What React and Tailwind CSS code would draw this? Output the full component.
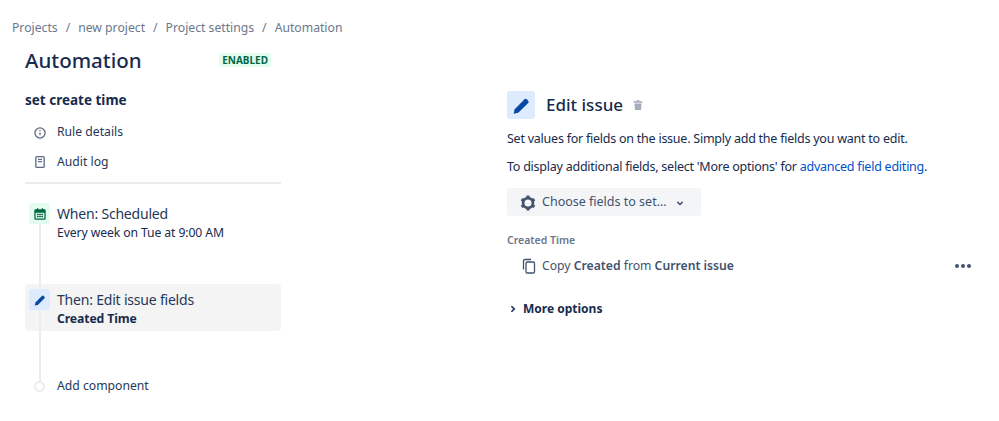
import React from 'react';

const font = { fontFamily: '"Noto Sans", sans-serif' };

function Pencil({ className }) {
  return (
    <svg viewBox="0 0 24 24" className={className} fill="currentColor">
      <path d="M4.2 16.3 15.6 4.9a1.6 1.6 0 0 1 2.2 0l1.9 1.9a1.6 1.6 0 0 1 0 2.2L8.3 20.4 3 21.5l1.2-5.2z" />
    </svg>
  );
}

function Step({ tone, icon, title, sub, bold, active }) {
  return (
    <div className={`flex h-[47px] items-start rounded pl-1 pt-[5px] ${active ? 'bg-[#f4f4f4]' : ''}`}>
      <span className={`relative flex h-[21px] w-[21px] items-center justify-center rounded-[3px] ${tone}`}>{icon}</span>
      <div className="ml-[7px]">
        <div className="text-[14px] leading-[21px] tracking-[-0.2px] text-[#253858]">{title}</div>
        <div className={`text-[12.2px] leading-[18px] tracking-[-0.1px] text-[#172b4d] ${bold ? 'font-bold' : ''}`}>{sub}</div>
      </div>
    </div>
  );
}

export default function App() {
  return (
    <div className="h-[421px] w-[999px] overflow-hidden bg-white text-[#172b4d]" style={font}>
      {/* Breadcrumbs */}
      <div className="flex gap-[8px] pl-3 pt-[20px] text-[12.2px] leading-[16px] text-[#6b778c]">
        <span>Projects</span><span>/</span>
        <span>new project</span><span>/</span>
        <span>Project settings</span><span>/</span>
        <span>Automation</span>
      </div>

      <div className="flex pl-[25px] pt-[8px]">
        {/* Left column */}
        <div className="w-[256px]">
          <div className="flex h-[32px] items-center justify-between pr-[10px]">
            <h1 className="text-[20.5px] font-medium leading-[30px] text-[#172b4d]">Automation</h1>
            <span className="rounded-[3px] bg-[#e3fcef] px-[3px] text-[10px] font-bold leading-[14px] text-[#006644]">ENABLED</span>
          </div>
          <div className="pt-[14px] text-[13.5px] font-bold leading-[20px] text-[#172b4d]">set create time</div>

          <div className="mt-[7px] flex h-[30px] items-center pl-[8px] pt-[1px] text-[12.2px] text-[#253858]">
            <svg viewBox="0 0 16 16" className="h-[14px] w-[14px] text-[#5e6c84]" fill="none" stroke="currentColor" strokeWidth="1.5">
              <circle cx="8" cy="8" r="5.8" />
              <path d="M8 7.4v3.2" />
              <circle cx="8" cy="5.2" r="0.9" fill="currentColor" stroke="none" />
            </svg>
            <span className="ml-[10px]">Rule details</span>
          </div>
          <div className="flex h-[30px] items-center pl-[8px] text-[12.2px] text-[#253858]">
            <svg viewBox="0 0 16 16" className="h-[14px] w-[14px] text-[#5e6c84]" fill="none" stroke="currentColor" strokeWidth="1.5">
              <rect x="3.2" y="1.8" width="9.6" height="12.4" rx="1.2" />
              <path d="M5.8 5h4.4M5.8 7.6h4.4" />
            </svg>
            <span className="ml-[10px]">Audit log</span>
          </div>
          <div className="mt-[5px] h-[2px] bg-[#ebecf0]" />

          {/* Rule steps */}
          <div className="relative pt-[14px]">
            <div className="absolute bottom-[14px] left-[14px] top-[30px] w-[2px] bg-[#ebecf0]" />
            <Step
              tone="bg-[#e3fcef]"
              icon={
                <svg viewBox="0 0 16 16" className="h-[14px] w-[14px] text-[#006644]" fill="currentColor">
                  <path fillRule="evenodd" d="M3 2.500h1.500V1.500h1.500v1h4v-1h1.500v1H13a1.500 1.500 0 0 1 1.500 1.500v9a1.500 1.500 0 0 1-1.500 1.500H3A1.500 1.500 0 0 1 1.500 13V4A1.500 1.500 0 0 1 3 2.500zM3 6.500V13h10V6.500H3zM4.500 7.800h2v1.500h-2zM7 7.800h2v1.500H7zM9.500 7.800h2v1.500h-2zM4.500 10.200h2v1.500h-2zM7 10.200h2v1.500H7zM9.500 10.200h2v1.500h-2z" />
                </svg>
              }
              title="When: Scheduled"
              sub="Every week on Tue at 9:00 AM"
            />
            <div className="h-[39px]" />
            <Step
              active
              tone="bg-[#deebff]"
              icon={<Pencil className="h-[14px] w-[14px] text-[#0747a6]" />}
              title="Then: Edit issue fields"
              sub="Created Time"
              bold
            />
            <div className="relative flex items-center pl-[9px] pt-[45px] text-[12.2px] leading-[20px] text-[#253858]">
              <span className="h-[11px] w-[11px] rounded-full border-2 border-[#ebecf0] bg-white" />
              <span className="ml-[12px]">Add component</span>
            </div>
          </div>
        </div>

        {/* Right column */}
        <div className="ml-[226px] w-[466px] pt-[47px]">
          <div className="flex items-center">
            <span className="flex h-[28px] w-[28px] items-center justify-center rounded-[3px] bg-[#deebff]">
              <Pencil className="h-[21px] w-[21px] text-[#0747a6]" />
            </span>
            <h2 className="ml-[11px] text-[17px] font-medium leading-[28px] text-[#172b4d]">Edit issue</h2>
            <svg viewBox="0 0 16 16" className="ml-[9px] h-[12px] w-[12px] text-[#a5adba]" fill="currentColor">
              <path d="M2 3h12v2H2zM6 1.500h4V3H6zM3.200 6h9.600l-.8 8.500H4z" />
            </svg>
          </div>
          <p className="mt-[10px] text-[12.5px] leading-[20px] tracking-[-0.24px] text-[#172b4d]">Set values for fields on the issue. Simply add the fields you want to edit.</p>
          <p className="mt-[8px] text-[12.5px] leading-[20px] tracking-[-0.24px] text-[#172b4d]">
            To display additional fields, select 'More options' for <span className="text-[#0052cc]">advanced field editing</span>.
          </p>
          <button className="mt-[11px] flex h-[28px] w-[194px] items-center rounded-[3px] bg-[#f4f5f7] pl-[12px] pt-[1px] text-[12.5px] text-[#42526e]">
            <svg viewBox="0 0 24 24" className="h-[18px] w-[18px]" fill="none" stroke="currentColor">
              <circle cx="12" cy="12" r="6.500" strokeWidth="3.500" />
              <path strokeWidth="4" d="M12 2v3M12 19v3M3.300 7l2.600 1.500M18.100 15.500l2.600 1.500M3.300 17l2.600-1.500M18.100 8.500 20.700 7" />
            </svg>
            <span className="ml-[5px]">Choose fields to set...</span>
            <svg viewBox="0 0 16 16" className="ml-[7px] h-[12px] w-[12px]" fill="none" stroke="currentColor" strokeWidth="2">
              <path d="M4.500 6.500 8 10l3.500-3.500" />
            </svg>
          </button>
          <div className="mt-[17px] text-[10.5px] font-semibold leading-[14px] text-[#6b778c]">Created Time</div>
          <div className="mt-[8px] flex h-[22px] items-center pl-[14px] text-[12.2px] text-[#42526e]">
            <svg viewBox="0 0 16 16" className="h-[16px] w-[16px] text-[#42526e]" fill="none" stroke="currentColor" strokeWidth="1.3">
              <path d="M2.500 11.500V2.800a1.300 1.300 0 0 1 1.300-1.300H10" />
              <rect x="5" y="4" width="8.500" height="11" rx="1.200" />
            </svg>
            <span className="ml-[5px]">Copy <b className="font-semibold">Created</b> from <b className="font-semibold">Current issue</b></span>
            <span className="ml-auto flex gap-[2px] pr-[2px]">
              <span className="h-[4px] w-[4px] rounded-full bg-[#42526e]" />
              <span className="h-[4px] w-[4px] rounded-full bg-[#42526e]" />
              <span className="h-[4px] w-[4px] rounded-full bg-[#42526e]" />
            </span>
          </div>
          <div className="mt-[22px] flex items-center text-[12px] font-bold leading-[20px] text-[#172b4d]">
            <svg viewBox="0 0 16 16" className="ml-[1px] h-[10px] w-[10px]" fill="none" stroke="currentColor" strokeWidth="2.500">
              <path d="M5.500 3.500 10 8l-4.500 4.500" />
            </svg>
            <span className="ml-[5px]">More options</span>
          </div>
        </div>
      </div>
    </div>
  );
}
